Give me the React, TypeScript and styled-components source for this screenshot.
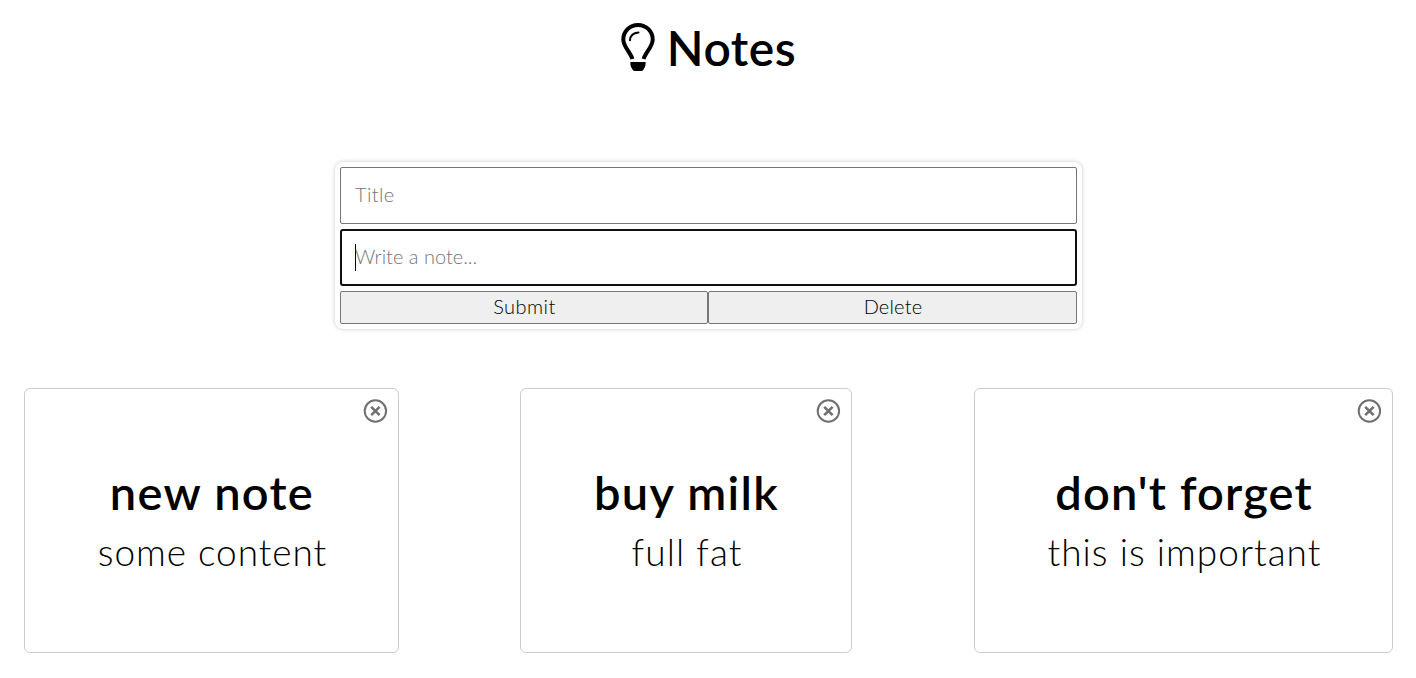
import React from "react";
import styled, { createGlobalStyle } from "styled-components";

const GlobalStyle = createGlobalStyle`
  *, *::before, *::after { box-sizing: border-box; }
  body {
    margin: 0;
    background: #fff;
    color: #000;
    font-family: Lato, "Open Sans", sans-serif;
    font-weight: 300;
  }
`;

const Page = styled.main`
  height: 678px;
  overflow: hidden;
`;

const Header = styled.header`
  display: flex;
  justify-content: center;
  padding: 18px 0 0;
  height: 162px;
`;

const Heading = styled.h1`
  margin: 0;
  font-size: 48px;
  font-weight: 600;
  line-height: 60px;
  letter-spacing: 0.5px;
`;

const BulbIcon = styled.svg`
  width: 36px;
  height: 50px;
  margin: 4px 11px 0 0;
`;

const Form = styled.form`
  display: flex;
  flex-direction: column;
  gap: 5px;
  width: 747px;
  height: 167px;
  margin: 0 0 0 335px;
  padding: 5px;
  border-radius: 8px;
  box-shadow: 0 0 4px rgba(0, 0, 0, 0.22);
`;

const Field = styled.div<{ $focused?: boolean }>`
  display: flex;
  align-items: center;
  height: 57px;
  padding: 0 ${(p) => (p.$focused ? 13 : 14)}px;
  border: ${(p) => (p.$focused ? "2px solid #101010" : "1px solid #767676")};
  border-radius: ${(p) => (p.$focused ? 3 : 2)}px;
  color: #757575;
  font-size: 20px;
  line-height: 27px;
`;

const Caret = styled.span`
  width: 1px;
  height: 27px;
  margin-right: -1px;
  background: #000;
`;

const Placeholder = styled.span<{ $spacing: number }>`
  padding-bottom: 2px;
  letter-spacing: ${(p) => p.$spacing}px;
`;

const Actions = styled.div`
  display: grid;
  grid-template-columns: 368px 369px;
  height: 33px;
`;

const ActionButton = styled.button<{ $spacing: number }>`
  padding: 0 0 2px 1px;
  border: 1px solid #767676;
  border-radius: 2px;
  background: #efefef;
  color: #000;
  font: inherit;
  font-size: 20px;
  line-height: 27px;
  letter-spacing: ${(p) => p.$spacing}px;
`;

const Notes = styled.section`
  display: grid;
  grid-template-columns: 496px 454px 419px;
  padding: 59px 0 0 24px;
`;

const Card = styled.article<{ $width: number }>`
  display: flex;
  flex-direction: column;
  align-items: center;
  width: ${(p) => p.$width}px;
  height: 265px;
  border: 1px solid #ccc;
  border-radius: 6px;
`;

const CloseIcon = styled.svg`
  align-self: flex-end;
  width: 25px;
  height: 24px;
  margin: 10px 10px 0 0;
`;

const CardTitle = styled.h2<{ $spacing: number }>`
  margin: 39px 0 0;
  padding-left: 1px;
  font-size: 47px;
  font-weight: 600;
  line-height: 60px;
  white-space: nowrap;
  letter-spacing: ${(p) => p.$spacing}px;
`;

const CardText = styled.p<{ $spacing: number }>`
  margin: 4px 0 0;
  padding-left: 2px;
  font-size: 37px;
  line-height: 52px;
  white-space: nowrap;
  letter-spacing: ${(p) => p.$spacing}px;
`;

const notes = [
  { title: "new note", text: "some content", width: 375, titleSpacing: 1.3, textSpacing: 0.95 },
  { title: "buy milk", text: "full fat", width: 332, titleSpacing: 1.3, textSpacing: 1.1 },
  { title: "don't forget", text: "this is important", width: 419, titleSpacing: 1.15, textSpacing: 1.02 },
];

export default function App() {
  return (
    <>
      <GlobalStyle />
      <Page>
        <Header>
          <BulbIcon viewBox="0 0 36 50" aria-hidden="true">
            <path
              d="M12.4 37C10.4 30.2 3.3 24.7 3.3 17.4C3.3 9.2 9.7 3 18 3S32.7 9.2 32.7 17.4C32.7 24.7 25.6 30.2 23.6 37"
              fill="none" stroke="#000" strokeWidth="4"
            />
            <path d="M10 18.2Q10.4 11.2 18.5 10.5" fill="none" stroke="#000" strokeWidth="2" strokeLinecap="round" />
            <path d="M10.4 40H25.6V42.5Q25.4 45.5 23 48.2Q22.3 49 21.3 49H14.7Q13.7 49 13 48.2Q10.6 45.5 10.4 42.5Z" />
          </BulbIcon>
          <Heading>Notes</Heading>
        </Header>
        <Form>
          <Field><Placeholder $spacing={0.4}>Title</Placeholder></Field>
          <Field $focused><Caret /><Placeholder $spacing={0}>Write a note...</Placeholder></Field>
          <Actions>
            <ActionButton type="button" $spacing={0.45}>Submit</ActionButton>
            <ActionButton type="button" $spacing={0.2}>Delete</ActionButton>
          </Actions>
        </Form>
        <Notes>
          {notes.map((n) => (
            <Card key={n.title} $width={n.width}>
              <CloseIcon viewBox="0 0 25 24" aria-label="Remove note">
                <circle cx="12.4" cy="12" r="10.7" fill="none" stroke="#707070" strokeWidth="2" />
                <path d="M8.2 7.8L16.6 16.2M16.6 7.8L8.2 16.2" stroke="#707070" strokeWidth="2.6" />
              </CloseIcon>
              <CardTitle $spacing={n.titleSpacing}>{n.title}</CardTitle>
              <CardText $spacing={n.textSpacing}>{n.text}</CardText>
            </Card>
          ))}
        </Notes>
      </Page>
    </>
  );
}
